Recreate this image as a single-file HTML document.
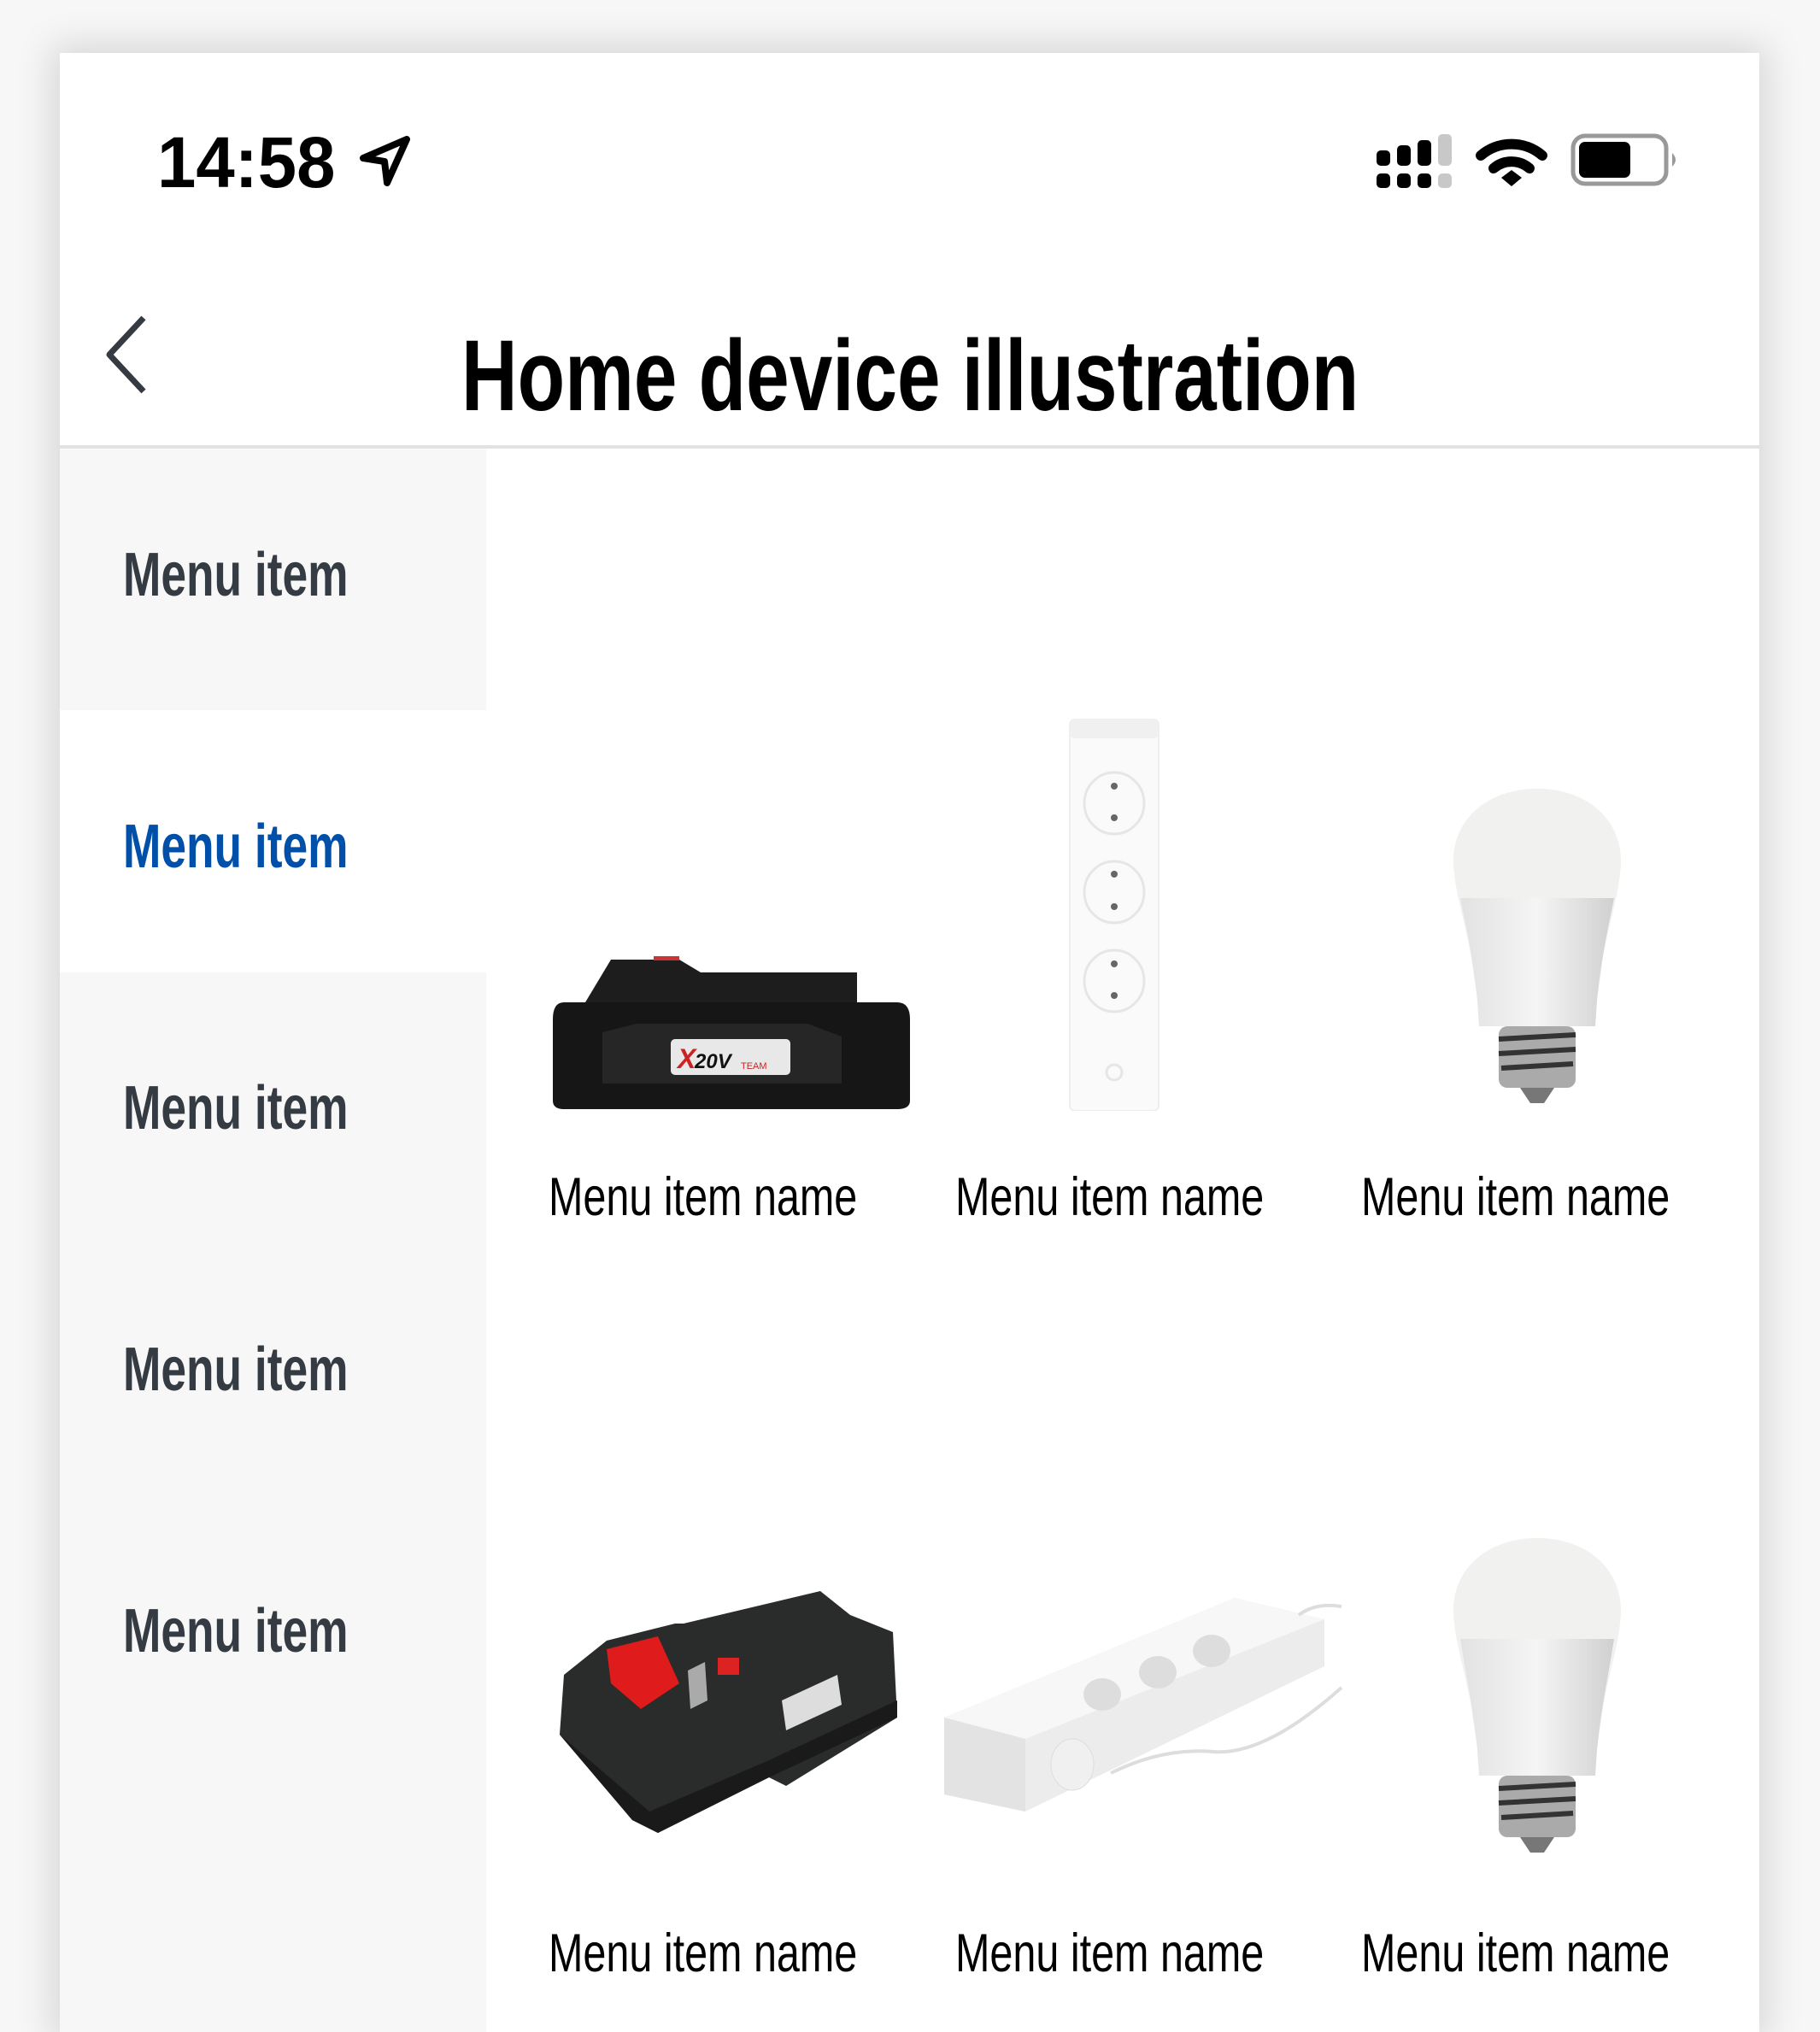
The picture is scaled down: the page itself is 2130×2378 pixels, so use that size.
<!DOCTYPE html>
<html><head><meta charset="utf-8"><style>
*{margin:0;padding:0;box-sizing:border-box}
html,body{width:2130px;height:2378px;overflow:hidden}
body{background:#f7f7f7;position:relative;font-family:"Liberation Sans",sans-serif}
.card{position:absolute;left:70px;top:62px;width:1989px;height:2316px;background:#fff;box-shadow:0 0 40px 10px rgba(0,0,0,.13)}
.abs{position:absolute}
.t{position:absolute;white-space:nowrap;transform-origin:left top}
.side{position:absolute;left:70px;top:526px;width:499px;height:1852px;background:#f7f7f7}
.mi{position:absolute;left:144px;font-weight:bold;font-size:72px;color:#353b42;transform:scaleX(.74);transform-origin:left top;white-space:nowrap}
.lb{position:absolute;font-size:63px;color:#000;transform:scaleX(.77);transform-origin:left top;white-space:nowrap}
</style></head><body>
<div class="card"></div>
<div class="t" style="left:184px;top:142px;font-size:84px;font-weight:bold;color:#000;transform:scaleX(.97)">14:58</div>
<svg class="abs" style="left:420px;top:158px" width="62" height="62" viewBox="0 0 62 62"><path d="M56 5 L5 27 L30 31 L33 56 Z" fill="none" stroke="#000" stroke-width="8" stroke-linejoin="round"/></svg>
<svg class="abs" style="left:1605px;top:150px" width="400" height="80" viewBox="1605 150 400 80">
<g fill="#000"><rect x="1611" y="176" width="16" height="18" rx="5"/><rect x="1611" y="203" width="16" height="17" rx="5"/>
<rect x="1635" y="170" width="16" height="24" rx="5"/><rect x="1635" y="203" width="16" height="17" rx="5"/>
<rect x="1659" y="164" width="16" height="30" rx="5"/><rect x="1659" y="203" width="16" height="17" rx="5"/></g>
<g fill="#c8c8c8"><rect x="1683" y="157" width="16" height="37" rx="5"/><rect x="1683" y="203" width="16" height="17" rx="5"/></g>
<path d="M1733 182 A55 55 0 0 1 1805 182" fill="none" stroke="#000" stroke-width="12" stroke-linecap="round"/>
<path d="M1748 197 A32 32 0 0 1 1790 197" fill="none" stroke="#000" stroke-width="12" stroke-linecap="round"/>
<path d="M1757 208 L1769 199 L1781 208 L1769 218 Z" fill="#000"/>
<rect x="1841" y="159" width="109" height="56" rx="14" fill="none" stroke="#999" stroke-width="5"/>
<rect x="1848" y="166" width="60" height="42" rx="7" fill="#000"/>
<path d="M1957 179 Q1965 187 1957 195 Z" fill="#999"/>
</svg>
<svg class="abs" style="left:118px;top:368px" width="60" height="94" viewBox="0 0 60 94"><path d="M50 4 L10 47 L50 90" fill="none" stroke="#353b42" stroke-width="7" stroke-linejoin="round"/></svg>
<div class="t" style="left:540px;top:372px;font-size:118px;font-weight:bold;color:#000;transform:scaleX(.77)">Home device illustration</div>
<div class="abs" style="left:70px;top:521px;width:1989px;height:4px;background:#e2e2e2"></div>
<div class="side"></div>
<div class="abs" style="left:70px;top:831px;width:499px;height:307px;background:#fff"></div>
<div class="mi" style="top:632px">Menu item</div>
<div class="mi" style="top:950px;color:#0050aa">Menu item</div>
<div class="mi" style="top:1256px">Menu item</div>
<div class="mi" style="top:1562px">Menu item</div>
<div class="mi" style="top:1868px">Menu item</div>

<svg class="abs" style="left:645px;top:1118px" width="422" height="182" viewBox="0 0 422 182">
<path d="M40 55 L70 5 L150 5 L175 20 L358 20 L358 55 Z" fill="#1d1d1d"/>
<rect x="120" y="1" width="30" height="5" fill="#c33"/>
<path d="M15 55 L405 55 Q420 55 420 75 L420 170 Q420 180 405 180 L15 180 Q2 180 2 170 L2 75 Q2 55 15 55 Z" fill="#161616"/>
<path d="M60 90 L100 80 L300 80 L340 95 L340 150 L60 150 Z" fill="#262626"/>
<rect x="140" y="98" width="140" height="42" rx="5" fill="#e8e8e8"/>
<text x="148" y="132" font-family="Liberation Sans" font-weight="bold" font-style="italic" font-size="32" fill="#c22">X</text>
<text x="168" y="132" font-family="Liberation Sans" font-weight="bold" font-style="italic" font-size="24" fill="#111">20V</text>
<text x="222" y="133" font-family="Liberation Sans" font-size="11" fill="#c22">TEAM</text>
</svg>
<svg class="abs" style="left:1250px;top:840px" width="110" height="460" viewBox="0 0 110 460">
<rect x="2" y="2" width="104" height="458" rx="6" fill="#fafafa" stroke="#eee" stroke-width="2"/>
<rect x="2" y="2" width="104" height="22" rx="6" fill="#f0f0f0"/>
<g fill="none" stroke="#e6e6e6" stroke-width="3"><ellipse cx="54" cy="100" rx="35" ry="36"/><ellipse cx="54" cy="204" rx="35" ry="36"/><ellipse cx="54" cy="308" rx="35" ry="36"/><circle cx="54" cy="415" r="9"/></g>
<g fill="#666"><circle cx="54" cy="80" r="4"/><circle cx="54" cy="117" r="4"/><circle cx="54" cy="183" r="4"/><circle cx="54" cy="221" r="4"/><circle cx="54" cy="288" r="4"/><circle cx="54" cy="325" r="4"/></g>
</svg>
<svg class="abs" style="left:1699px;top:921px" width="200" height="372" viewBox="0 0 200 372">
<defs><linearGradient id="g1" x1="0" x2="1"><stop offset="0" stop-color="#e2e2e2"/><stop offset=".5" stop-color="#f5f5f5"/><stop offset="1" stop-color="#d0d0d0"/></linearGradient></defs>
<path d="M100 2 C160 2 200 40 198 90 C196 130 180 170 175 215 L165 280 L35 280 L25 215 C20 170 4 130 2 90 C0 40 40 2 100 2 Z" fill="#f1f1f0"/>
<path d="M10 130 L190 130 C182 170 175 200 170 250 L168 280 L32 280 L30 250 C25 200 18 170 10 130 Z" fill="url(#g1)"/>
<rect x="55" y="280" width="90" height="72" rx="10" fill="#aaa"/>
<g stroke="#333" stroke-width="6"><line x1="55" y1="295" x2="145" y2="290"/><line x1="55" y1="312" x2="145" y2="307"/><line x1="58" y1="329" x2="142" y2="324"/></g>
<path d="M80 352 L120 352 L108 370 L92 370 Z" fill="#777"/>
</svg>
<svg class="abs" style="left:1699px;top:1798px" width="200" height="372" viewBox="0 0 200 372">
<path d="M100 2 C160 2 200 40 198 90 C196 130 180 170 175 215 L165 280 L35 280 L25 215 C20 170 4 130 2 90 C0 40 40 2 100 2 Z" fill="#f1f1f0"/>
<path d="M10 120 L190 120 C182 170 175 200 170 250 L168 280 L32 280 L30 250 C25 200 18 170 10 120 Z" fill="url(#g1)"/>
<rect x="55" y="280" width="90" height="72" rx="10" fill="#aaa"/>
<g stroke="#333" stroke-width="6"><line x1="55" y1="295" x2="145" y2="290"/><line x1="55" y1="312" x2="145" y2="307"/><line x1="58" y1="329" x2="142" y2="324"/></g>
<path d="M80 352 L120 352 L108 370 L92 370 Z" fill="#777"/>
</svg>
<svg class="abs" style="left:650px;top:1860px" width="405" height="290" viewBox="0 0 405 290">
<path d="M150 40 L310 2 L345 30 L395 50 L400 150 L270 230 L250 220 L120 285 L90 270 L5 170 L10 100 L60 60 L140 40 Z" fill="#2a2b2b"/>
<path d="M5 170 L90 270 L120 285 L250 220 L400 150 L400 130 L250 200 L110 260 Z" fill="#1a1a1a"/>
<path d="M60 70 L120 55 L145 110 L100 140 L65 110 Z" fill="#e01b1b"/>
<rect x="190" y="80" width="25" height="20" fill="#d22"/>
<path d="M155 95 L175 85 L178 130 L158 140 Z" fill="#aaa"/>
<path d="M265 130 L330 100 L335 135 L270 165 Z" fill="#ddd"/>
</svg>
<svg class="abs" style="left:1100px;top:1865px" width="475" height="265" viewBox="0 0 475 265">
<path d="M5 145 L345 5 L450 30 L450 85 L100 255 L5 235 Z" fill="#ececec"/>
<path d="M5 145 L100 170 L450 30 L345 5 Z" fill="#f7f7f7"/>
<path d="M5 145 L100 170 L100 255 L5 235 Z" fill="#e3e3e3"/>
<g fill="#ddd"><ellipse cx="190" cy="118" rx="22" ry="19"/><ellipse cx="255" cy="92" rx="22" ry="19"/><ellipse cx="318" cy="67" rx="22" ry="19"/></g>
<path d="M420 25 Q440 10 470 15 M200 210 Q260 180 320 185 Q380 190 470 110" fill="none" stroke="#ddd" stroke-width="4"/>
<ellipse cx="155" cy="200" rx="25" ry="30" fill="#f0f0f0" stroke="#ddd"/>
</svg>

<div class="lb" style="left:642px;top:1365px">Menu item name</div>
<div class="lb" style="left:1118px;top:1365px">Menu item name</div>
<div class="lb" style="left:1593px;top:1365px">Menu item name</div>
<div class="lb" style="left:642px;top:2250px">Menu item name</div>
<div class="lb" style="left:1118px;top:2250px">Menu item name</div>
<div class="lb" style="left:1593px;top:2250px">Menu item name</div>
</body></html>
